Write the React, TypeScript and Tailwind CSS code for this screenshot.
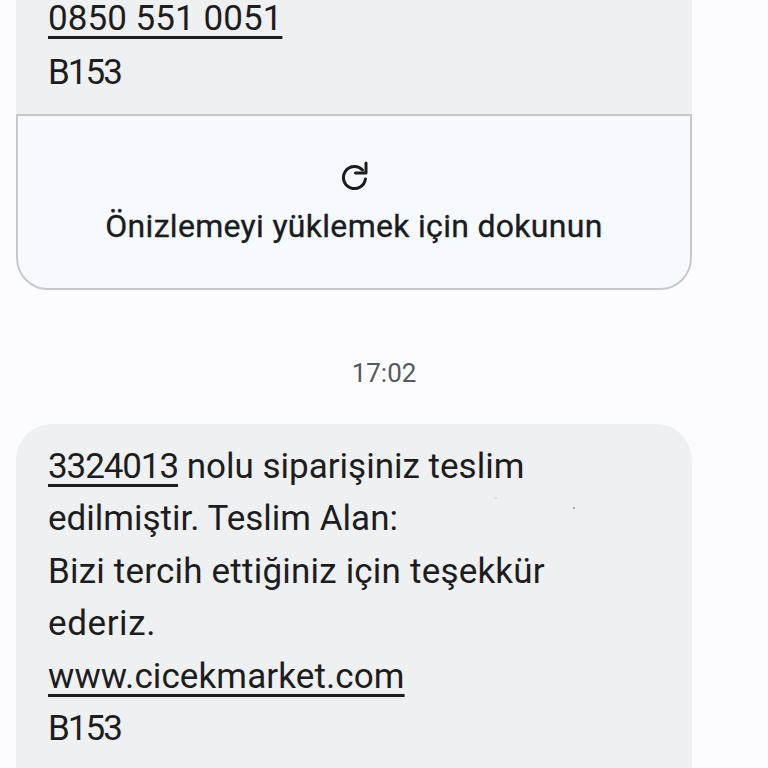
const font = "[font-family:Roboto,'Noto_Sans',sans-serif]";

function Link({ children, className = "" }: { children: React.ReactNode; className?: string }) {
  return <span className={`underline decoration-[3px] underline-offset-[6px] [text-decoration-skip-ink:none] ${className}`}>{children}</span>;
}

function RefreshIcon() {
  return (
    <svg width="30" height="30" viewBox="0 0 30 30" fill="none" stroke="#1b1c1f" strokeWidth="3" strokeLinecap="round" strokeLinejoin="round">
      <path d="M23.5 9a11 11 0 1 0 2.9 9" />
      <path d="M27 2V12H16.5" />
    </svg>
  );
}

export default function App() {
  return (
    <div className={`h-[768px] w-[768px] overflow-hidden bg-[#fcfcfe] px-4 text-[#1d1d20] ${font}`}>
      <div className="w-[676px]">
        {/* previous message, scrolled off the top */}
        <div className="bg-[#eff0f2] px-8 pb-[14px] text-[35px]">
          <div className="leading-[37px] tracking-[0.05px]"><Link>0850 551 0051</Link></div>
          <div className="mt-[10px] leading-[52.5px] tracking-[-2px]">B153</div>
        </div>
        <div className="flex h-[176px] flex-col items-center rounded-b-[32px] border-2 border-[#c6c8cc] bg-[#f6fafe] pt-[45px]">
          <RefreshIcon />
          <div className="mt-[15px] text-[32px] leading-[40px] tracking-[0.3px] text-[#1b1c1f] [-webkit-text-stroke:0.35px_#1b1c1f]">Önizlemeyi yüklemek için dokunun</div>
        </div>
      </div>
      <div className="w-[736px] pt-[64px] pb-[32px] text-center text-[26px] leading-[38px] text-[#55585c]">17:02</div>
      <div className="relative h-[400px] w-[676px] rounded-[36px] bg-[#eff0f2] px-8 pt-[17px] text-[35px] leading-[52.5px]">
        <div><Link className="tracking-[-1.1px]">3324013</Link> nolu siparişiniz teslim</div>
        <div>edilmiştir. Teslim Alan:</div>
        <div className="tracking-[0.2px]">Bizi tercih ettiğiniz için teşekkür</div>
        <div className="tracking-[0.6px]">ederiz.</div>
        <div className="tracking-[0.1px]"><Link>www.cicekmarket.com</Link></div>
        <div className="tracking-[-2px]">B153</div>
        <span className="absolute top-[73px] left-[478px] h-[2px] w-[3px] bg-[#dcdde0]" />
        <span className="absolute top-[83px] left-[557px] h-[2px] w-[2px] bg-[#a9abb0]" />
      </div>
    </div>
  );
}
